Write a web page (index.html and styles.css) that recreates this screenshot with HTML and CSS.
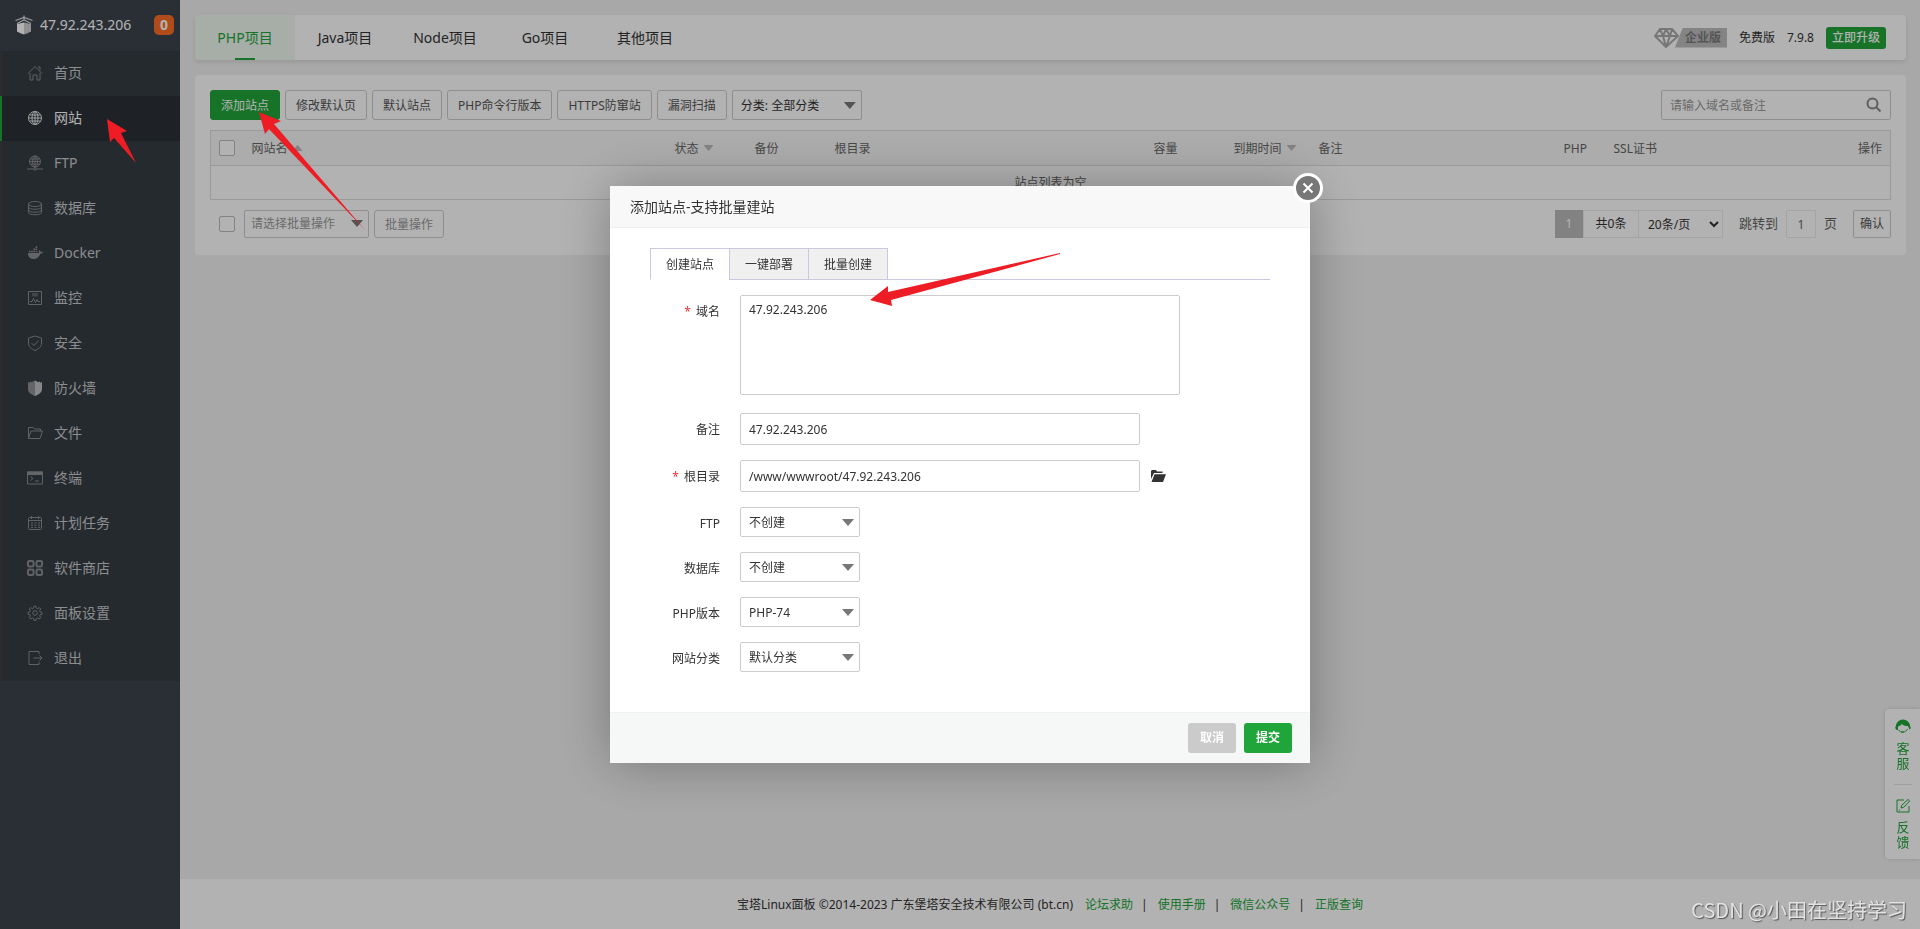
FILE: index.html
```html
<!DOCTYPE html>
<html lang="zh-CN">
<head>
<meta charset="utf-8">
<title>宝塔Linux面板</title>
<link rel="stylesheet" href="styles.css">
</head>
<body>
<div class="app">
  <aside class="sidebar">
    <div class="server">
      <svg class="server-logo" viewBox="0 0 18 20" width="18" height="20"><path d="M9 .5v4M.5 5.500L9 2.500l8.500 3M2 8.500L9 5l7 3.500" fill="none" stroke="#ddd" stroke-width="1.300"/><path d="M9 7.500l7 1.500v7.500L12 18.500 9 19.500z" fill="#cfcfcf"/><path d="M9 7.500L2 9v7.500l4 2 3 1z" fill="#fff"/></svg>
      <span class="server-ip">47.92.243.206</span>
      <span class="server-badge">0</span>
    </div>
    <nav class="menu">
      <a href="#" class="menu-item"><svg class="menu-icon" viewBox="0 0 16 16"><path d="M1 8.500l7-7 7 7M3 8v7h3v-5h4v5h3V8M11 2h2v3"/></svg>首页</a>
      <a href="#" class="menu-item active"><svg class="menu-icon" viewBox="0 0 16 16"><circle cx="8" cy="8" r="6.500"/><ellipse cx="8" cy="8" rx="3" ry="6.500"/><path d="M8 1.500v13M1.500 8h13M2.500 5h11M2.500 11h11"/></svg>网站</a>
      <a href="#" class="menu-item"><svg class="menu-icon" viewBox="0 0 16 16"><circle cx="8" cy="6.500" r="5.500"/><ellipse cx="8" cy="6.500" rx="2.500" ry="5.500"/><path d="M8 1v12M2.500 6.500h11M3.500 4h9M3.500 9h9M0 14h6M10 14h6"/><circle cx="8" cy="14" r="1.300"/></svg>FTP</a>
      <a href="#" class="menu-item"><svg class="menu-icon" viewBox="0 0 16 16"><ellipse cx="8" cy="4" rx="6.500" ry="2.500"/><path d="M1.500 4v8.500c0 3 13 3 13 0V4M1.500 7c0 3 13 3 13 0M1.500 10c0 3 13 3 13 0"/></svg>数据库</a>
      <a href="#" class="menu-item"><svg class="menu-icon" viewBox="0 0 16 16"><path class="solid" d="M1 8h11c0-1-.5-2 .5-3 1 .5 1 1.500 1 2 1-.3 2-.2 2.500.3-.5 1-1.500 1.200-2.500 1.200C12 12 10 14 6.500 14 3 14 1 12 1 8zM2 5.700h1.600v1.600H2zM4.200 5.700h1.600v1.600H4.200zM6.400 5.700H8v1.600H6.400zM8.600 5.700h1.600v1.600H8.600zM6.400 3.500H8v1.600H6.400zM8.600 3.500h1.600v1.600H8.600zM8.600 1.300h1.600v1.600H8.600z"/></svg>Docker</a>
      <a href="#" class="menu-item"><svg class="menu-icon" viewBox="0 0 16 16"><path d="M1.500 1.500h13v13h-13zM3 11.500h2l1.500-3 2 4 1.500-3 1 2h2"/><path class="solid dim" d="M5 3h6v3.500H5z"/></svg>监控</a>
      <a href="#" class="menu-item"><svg class="menu-icon" viewBox="0 0 16 16"><path d="M8 1l6.500 2v5c0 4-3 6-6.500 7.500C4.500 14 1.500 12 1.500 8V3zM4.500 8l2.500 2.500L11.500 5.500"/></svg>安全</a>
      <a href="#" class="menu-item"><svg class="menu-icon" viewBox="0 0 16 16"><path class="solid" d="M8 0.500v15.500C4 14.500 1 12.500 1 9V2l2 .8V1.500l2 .8 1-.8z"/><path class="solid bright" d="M8 0.500v15.500c4-1.500 7-3.500 7-7V2l-2 .8V1.500l-2 .8-1-.8z"/></svg>防火墙</a>
      <a href="#" class="menu-item"><svg class="menu-icon" viewBox="0 0 16 16"><path d="M1.500 13.500v-11h4.500l1.500 1.500h6v2M1.500 13.500L4 6h11.500L13 13.500z"/></svg>文件</a>
      <a href="#" class="menu-item"><svg class="menu-icon" viewBox="0 0 16 16"><path d="M.5 2h15v12H.5zM3.500 6.500L6 8.500l-2.500 2M8 11h4"/><path class="solid" d="M0 1.500h16V5H0z"/></svg>终端</a>
      <a href="#" class="menu-item"><svg class="menu-icon" viewBox="0 0 16 16"><rect x="1.500" y="2.500" width="13" height="12" rx="1"/><path d="M1.500 5.500h13M4.500 1v3M11.500 1v3"/><path stroke-dasharray="2 1.500" d="M4 8h9M4 10.200h9M4 12.400h9"/></svg>计划任务</a>
      <a href="#" class="menu-item"><svg class="menu-icon thick" viewBox="0 0 16 16"><rect x="1" y="1" width="5.500" height="5.500" rx="1.300"/><rect x="9.500" y="1" width="5.500" height="5.500" rx="1.300"/><rect x="1" y="9.500" width="5.500" height="5.500" rx="1.300"/><rect x="9.500" y="9.500" width="5.500" height="5.500" rx="1.300"/></svg>软件商店</a>
      <a href="#" class="menu-item"><svg class="menu-icon" viewBox="0 0 16 16"><circle cx="8" cy="8" r="2.300"/><path d="M6.600 3.200L7 1.200h2l.4 2 1.200.5 1.700-1.100 1.400 1.400-1.100 1.700.5 1.200 1.900.4v2l-1.900.4-.5 1.200 1.100 1.700-1.400 1.400-1.700-1.100-1.200.5-.4 1.900H7l-.4-1.900-1.200-.5L3.700 14l-1.400-1.400 1.100-1.700-.5-1.200L1 9.300v-2l1.900-.4.5-1.200L2.300 4l1.400-1.400 1.700 1.100z"/></svg>面板设置</a>
      <a href="#" class="menu-item"><svg class="menu-icon" viewBox="0 0 16 16"><path d="M12 4V1.500H2v13h10V12M6.500 8h8M12.500 5.500L15 8l-2.500 2.500"/></svg>退出</a>
    </nav>
  </aside>

  <div class="page">
    <main class="content">
      <header class="card topbar">
        <nav class="project-tabs">
          <a href="#" class="project-tab current">PHP项目</a>
          <a href="#" class="project-tab">Java项目</a>
          <a href="#" class="project-tab">Node项目</a>
          <a href="#" class="project-tab">Go项目</a>
          <a href="#" class="project-tab">其他项目</a>
        </nav>
        <div class="license">
          <span class="edition"><svg class="diamond" viewBox="0 0 26 20" width="26" height="20"><path d="M6 1h12l6 7-12 11L1 8zM1 8h23M6 1l3 7 3 11 4-11 2-7M9 8l3-7 4 7"/></svg><span class="edition-name">企业版</span></span>
          <span>免费版</span>
          <span>7.9.8</span>
          <button type="button" class="upgrade">立即升级</button>
        </div>
      </header>

      <section class="card panel">
        <div class="toolbar">
          <button type="button" class="btn btn-green">添加站点</button>
          <button type="button" class="btn">修改默认页</button>
          <button type="button" class="btn">默认站点</button>
          <button type="button" class="btn">PHP命令行版本</button>
          <button type="button" class="btn">HTTPS防窜站</button>
          <button type="button" class="btn">漏洞扫描</button>
          <span class="select category"><select aria-label="分类"><option>分类: 全部分类</option></select></span>
          <div class="search">
            <input type="text" aria-label="搜索" placeholder="请输入域名或备注">
            <svg viewBox="0 0 16 16" width="16" height="16"><circle cx="6.500" cy="6.500" r="5"/><path d="M10 10l4.500 4.500"/></svg>
          </div>
        </div>
        <table class="sites">
          <colgroup><col class="c-check"><col class="c-name"><col class="c-state"><col class="c-backup"><col class="c-root"><col class="c-size"><col class="c-expire"><col class="c-note"><col class="c-php"><col class="c-ssl"></colgroup>
          <thead>
            <tr>
              <th><input type="checkbox" class="tick" aria-label="全选"></th>
              <th>网站名<i class="sort up"></i></th><th>状态<i class="sort"></i></th><th>备份</th><th>根目录</th><th>容量</th><th>到期时间<i class="sort"></i></th><th>备注</th><th>PHP</th>
              <th><span class="split"><span>SSL证书</span><span>操作</span></span></th>
            </tr>
          </thead>
          <tbody><tr><td colspan="10" class="empty">站点列表为空</td></tr></tbody>
        </table>
        <div class="table-foot">
          <div class="batch">
            <input type="checkbox" class="tick" aria-label="批量选择">
            <span class="select muted"><select aria-label="批量操作"><option>请选择批量操作</option></select></span>
            <button type="button" class="btn muted-btn">批量操作</button>
          </div>
          <div class="pager">
            <span class="page-now">1</span>
            <span class="page-total">共0条</span>
            <select class="page-size" aria-label="每页条数"><option>20条/页</option></select>
            <label class="jump">跳转到<input type="text" value="1">页</label>
            <button type="button" class="confirm">确认</button>
          </div>
        </div>
      </section>
    </main>
    <footer class="footer">
      <span>宝塔Linux面板 ©2014-2023 广东堡塔安全技术有限公司 (bt.cn)</span>
      <a href="#">论坛求助</a><span class="bar">|</span>
      <a href="#">使用手册</a><span class="bar">|</span>
      <a href="#">微信公众号</a><span class="bar">|</span>
      <a href="#">正版查询</a>
    </footer>
  </div>
</div>

<aside class="service">
  <a href="#" class="service-item"><svg viewBox="0 0 16 16" width="16" height="16"><path class="fill" d="M1 7a7 6.500 0 0 1 14 0c1 1 1 3-.5 3.500L13 7c-3 0-5-.5-6-2-1 1-2 2-4 2.500V11C0 11-.3 8 1 7z"/><path d="M3.500 11c2 3 7 3 9-1M6 13h3"/></svg><span>客服</span></a>
  <a href="#" class="service-item"><svg viewBox="0 0 16 16" width="16" height="16"><path d="M9 2H2v12h12V8M6 10l.7-2.700L13 1.500 14.700 3 8.700 9.300zM4 12h1"/></svg><span>反馈</span></a>
</aside>

<div class="overlay">
  <form class="dialog" role="dialog" aria-labelledby="dialog-title">
    <button type="button" class="close" aria-label="关闭"><svg viewBox="0 0 30 30" width="30" height="30"><circle cx="15" cy="15" r="13.500"/><path d="M10.500 10.500l9 9M19.500 10.500l-9 9"/></svg></button>
    <h1 class="dialog-title" id="dialog-title">添加站点-支持批量建站</h1>
    <div class="dialog-body">
      <div class="tabs" role="tablist">
        <button type="button" role="tab" class="tab on">创建站点</button>
        <button type="button" role="tab" class="tab">一键部署</button>
        <button type="button" role="tab" class="tab">批量创建</button>
      </div>
      <div class="fields">
        <label class="label" for="domain"><b>*</b>域名</label>
        <textarea id="domain" class="field">47.92.243.206</textarea>
        <label class="label" for="note">备注</label>
        <input id="note" class="field" type="text" value="47.92.243.206">
        <label class="label" for="root"><b>*</b>根目录</label>
        <div class="path"><input id="root" class="field" type="text" value="/www/wwwroot/47.92.243.206"><svg viewBox="0 0 16 14" width="16" height="14"><path d="M1 10V2l1-1h4l1 1.500h5.500V4H4zM1.500 13L4.500 5.300H16L13 13z"/></svg></div>
        <label class="label" for="ftp">FTP</label>
        <span class="select"><select id="ftp"><option>不创建</option></select></span>
        <label class="label" for="db">数据库</label>
        <span class="select"><select id="db"><option>不创建</option></select></span>
        <label class="label" for="php">PHP版本</label>
        <span class="select"><select id="php"><option>PHP-74</option></select></span>
        <label class="label" for="type">网站分类</label>
        <span class="select"><select id="type"><option>默认分类</option></select></span>
      </div>
    </div>
    <div class="dialog-foot">
      <button type="button" class="act cancel">取消</button>
      <button type="submit" class="act">提交</button>
    </div>
  </form>
</div>

<svg class="arrows" width="1100" height="320" viewBox="0 0 1100 320">
  <path d="M107 119l20 12-6 2 15 30-22-25-4 4z"/>
  <path d="M259 112l22 9-7 3 91 106-96-101-4 5z"/>
  <path d="M870 300l18-14v6l172-39v1l-169 46 1 6z"/>
</svg>
<div class="watermark">CSDN @小田在坚持学习</div>
</body>
</html>
```

FILE: styles.css
```css
* { box-sizing: border-box; }
body {
  margin: 0;
  background: #f1f1f1;
  color: #333;
  font: 12px/18px "Noto Sans", "Noto Sans CJK SC", sans-serif;
}
a { color: inherit; text-decoration: none; }
button, input, select, textarea { font: inherit; color: inherit; margin: 0; }
.app { display: flex; min-height: 100vh; }

.sidebar { flex: 0 0 180px; background: #3c444d; }
.server {
  display: flex;
  align-items: center;
  height: 51px;
  padding: 0 6px 2px 15px;
  color: #fff;
  font-size: 14px;
}
.server-logo { margin-right: 7px; }
.server-badge {
  width: 20px;
  margin-left: auto;
  border-radius: 5px;
  background: #fc6d26;
  font-weight: bold;
  line-height: 20px;
  text-align: center;
}
.menu { background: #353d44; }
.menu-item {
  display: flex;
  align-items: center;
  gap: 11px;
  height: 45px;
  padding: 0 0 2px 25px;
  border-left: 2px solid #404040;
  color: #c8cacc;
  font-size: 14px;
}
.menu-icon { width: 16px; height: 16px; fill: none; stroke: #8a8d90; stroke-width: 1; }
.menu-icon .solid { fill: #8f9194; stroke: none; }
.menu-icon .bright { fill: #c0c2c4; }
.menu-icon .dim { fill: #60666c; }
.menu-icon.thick { stroke-width: 2; }
.menu-item.active { background: #2c3138; border-color: #20a53a; color: #fff; }
.active .menu-icon { stroke: #e8e8e8; }

.page { display: flex; flex: 1; flex-direction: column; min-width: 0; }
.content { display: grid; gap: 15px; padding: 15px; }
.card { border-radius: 4px; background: #fff; }
.topbar {
  display: flex;
  justify-content: space-between;
  height: 45px;
  overflow: hidden;
  box-shadow: 0 2px 4px rgba(0, 0, 0, .1);
}
.project-tabs { display: flex; }
.project-tab {
  display: flex;
  flex-direction: column;
  align-items: center;
  width: 100px;
  font-size: 14px;
  line-height: 46px;
}
.project-tab.current { background: #eff9f1; color: #20a53a; }
.current::after { content: ""; width: 20px; height: 2px; margin-top: -3px; background: #20a53a; }
.license { display: flex; align-items: center; gap: 12px; padding: 0 20px 0 0; }
.edition { display: flex; align-items: center; }
.diamond { z-index: 1; margin-right: -5px; fill: none; stroke: #777; stroke-width: 2; }
.edition-name {
  padding: 0 6px 0 10px;
  background: #bdbdbd;
  color: #7a7a7a;
  font-weight: bold;
  line-height: 20px;
  clip-path: polygon(8px 0, 100% 0, 100% 100%, 0 100%);
}
.upgrade {
  height: 22px;
  padding: 0 6px;
  border: 0;
  border-radius: 3px;
  background: #20a53a;
  color: #fff;
  font-weight: 500;
}

.panel { padding: 15px 15px 17px; }
.toolbar { display: flex; gap: 5px; }
.btn {
  height: 30px;
  padding: 2px 10px 0;
  border: 1px solid #ccc;
  border-radius: 3px;
  background: #fff;
  color: #555;
}
.btn-green { border-color: #20a53a; background: #20a53a; color: #fff; }
.select { position: relative; display: block; width: 120px; height: 30px; }
.select select {
  width: 100%;
  height: 100%;
  padding: 2px 8px 0;
  border: 1px solid #ccc;
  border-radius: 2px;
  background: #fff;
  appearance: none;
}
.select::after {
  content: "";
  position: absolute;
  top: 12px;
  right: 6px;
  width: 12px;
  height: 7px;
  background: #777;
  clip-path: polygon(0 0, 100% 0, 50% 100%);
  pointer-events: none;
}
.category { width: 130px; }
.search {
  display: flex;
  align-items: center;
  width: 230px;
  margin-left: auto;
  padding: 0 8px;
  border: 1px solid #ccc;
  border-radius: 2px;
}
.search input { flex: 1; min-width: 0; padding: 2px 0 0; border: 0; outline: 0; background: none; }
.search input::placeholder { color: #999; }
.search svg { fill: none; stroke: #888; stroke-width: 2; }

.sites {
  width: 100%;
  margin: 10px 0;
  border: 1px solid #ddd;
  border-collapse: collapse;
  table-layout: fixed;
  color: #666;
}
.sites th { height: 35px; padding: 2px 8px 0; background: #f6f6f6; font-weight: normal; text-align: left; white-space: nowrap; }
.sites td { height: 34px; padding: 0; border-top: 1px solid #ddd; }
.sites .tick { margin-top: -2px; }
.sites .empty { text-align: center; }
.c-check { width: 33px; }
.c-name { width: 423px; }
.c-state, .c-backup, .c-size { width: 80px; }
.c-root { width: 319px; }
.c-expire { width: 85px; }
.c-note { width: 245px; }
.c-php { width: 50px; }
.c-ssl { width: 285px; }
.split { display: flex; justify-content: space-between; }
.sort {
  display: inline-block;
  width: 10px;
  height: 6px;
  margin: 0 0 2px 5px;
  background: #bbb;
  clip-path: polygon(0 0, 100% 0, 50% 100%);
}
.sort.up { clip-path: polygon(50% 0, 100% 100%, 0 100%); }
.tick {
  display: block;
  width: 16px;
  height: 16px;
  border: 1px solid #bbb;
  border-radius: 2px;
  background: #fff;
  appearance: none;
}
.table-foot { display: flex; justify-content: space-between; }
.batch { display: flex; align-items: center; gap: 5px; padding-left: 9px; }
.batch .tick { margin-right: 4px; }
.muted { width: 125px; height: 28px; color: #999; }
.muted select { padding: 0 6px; }
.muted::after { top: 10px; }
.muted-btn { height: 28px; color: #999; }
.pager { display: flex; align-items: center; height: 28px; line-height: 26px; }
.page-now { width: 28px; border: 1px solid #bbb; background: #bbb; color: #fff; text-align: center; }
.page-total { width: 56px; border: 1px solid #ececec; text-align: center; }
.page-size { width: 84px; height: 28px; padding: 0 5px; border: 1px solid #ececec; border-left: 0; background: none; }
.jump { display: flex; gap: 8px; padding: 0 16px; color: #666; font-size: 13px; }
.jump input { width: 30px; height: 28px; border: 1px solid #ececec; background: none; font-size: 12px; text-align: center; }
.confirm { width: 38px; height: 28px; padding: 0; border: 1px solid #ccc; border-radius: 2px; background: none; color: #555; }

.footer {
  display: flex;
  align-items: center;
  justify-content: center;
  gap: 12px;
  height: 50px;
  margin-top: auto;
  padding-top: 2px;
  background: #fff;
}
.footer a { color: #20a53a; }
.footer .bar { margin: 0 -2px 0 -4px; }

.service {
  position: fixed;
  right: 0;
  bottom: 70px;
  width: 35px;
  padding: 0 8px 0 9px;
  border-radius: 4px 0 0 4px;
  background: #fff;
  box-shadow: 0 0 4px rgba(0, 0, 0, .15);
  color: #20a53a;
}
.service-item {
  display: flex;
  flex-direction: column;
  align-items: center;
  gap: 6px;
  height: 75px;
  padding-top: 10px;
  font-size: 13px;
  line-height: 15px;
}
.service-item + .service-item { padding-top: 13px; border-top: 1px solid #e6e6e6; }
.service-item span { width: 13px; }
.service-item svg { flex: none; fill: none; stroke: #20a53a; }
.service-item .fill { fill: #20a53a; stroke: none; }

.overlay {
  position: fixed;
  inset: 0;
  display: flex;
  align-items: center;
  justify-content: center;
  padding-top: 20px;
  background: rgba(0, 0, 0, .3);
}
.dialog {
  position: relative;
  width: 700px;
  background: #fff;
  box-shadow: 1px 1px 50px rgba(0, 0, 0, .3);
}
.close {
  position: absolute;
  top: -13px;
  right: -13px;
  width: 30px;
  height: 30px;
  padding: 0;
  border: 0;
  background: none;
}
.close svg { display: block; fill: #777; stroke: #fff; stroke-width: 3; }
.close path { stroke-width: 2; }
.dialog-title {
  margin: 0;
  padding: 0 20px;
  border-bottom: 1px solid #eee;
  background: #f8f8f8;
  font-size: 14px;
  font-weight: normal;
  line-height: 41px;
}
.dialog-body { padding: 20px 40px 40px; }
.tabs { display: flex; border-bottom: 1px solid #ccc8dc; }
.tab {
  width: 80px;
  height: 32px;
  margin: 0 -1px -1px 0;
  padding: 2px 0 0;
  border: 1px solid #ccc8dc;
  background: #f0f0f0;
}
.tab.on { border-bottom-color: #fff; background: #fff; }
.fields {
  display: grid;
  grid-template-columns: 70px 1fr;
  gap: 15px 20px;
  padding-top: 15px;
}
.label { height: 30px; line-height: 34px; text-align: right; white-space: nowrap; }
.label b { margin-right: 5px; color: #e33; font-weight: normal; }
.field {
  width: 400px;
  height: 32px;
  padding: 0 8px;
  border: 1px solid #ccc;
  border-radius: 2px;
  background: #fff;
}
textarea.field { width: 440px; height: 100px; margin-bottom: 3px; padding: 5px 8px; resize: none; }
.path { display: flex; align-items: center; gap: 10px; }
.path svg { fill: #333; }
.dialog-foot {
  display: flex;
  justify-content: flex-end;
  gap: 8px;
  padding: 10px 18px;
  border-top: 1px solid #edf1f0;
  background: #f6f8f8;
}
.act {
  width: 48px;
  height: 30px;
  padding: 0;
  border: 0;
  border-radius: 3px;
  background: #20a53a;
  color: #fff;
  font-weight: bold;
}
.cancel { background: #cbcbcb; }

.arrows { position: absolute; top: 0; left: 0; fill: #ee1c24; pointer-events: none; }
.watermark {
  position: fixed;
  right: 13px;
  bottom: 4px;
  color: #e2e2e2;
  font: 20px/30px "Noto Sans CJK SC", sans-serif;
  text-shadow: 1px 1px 1px #555;
}
```
